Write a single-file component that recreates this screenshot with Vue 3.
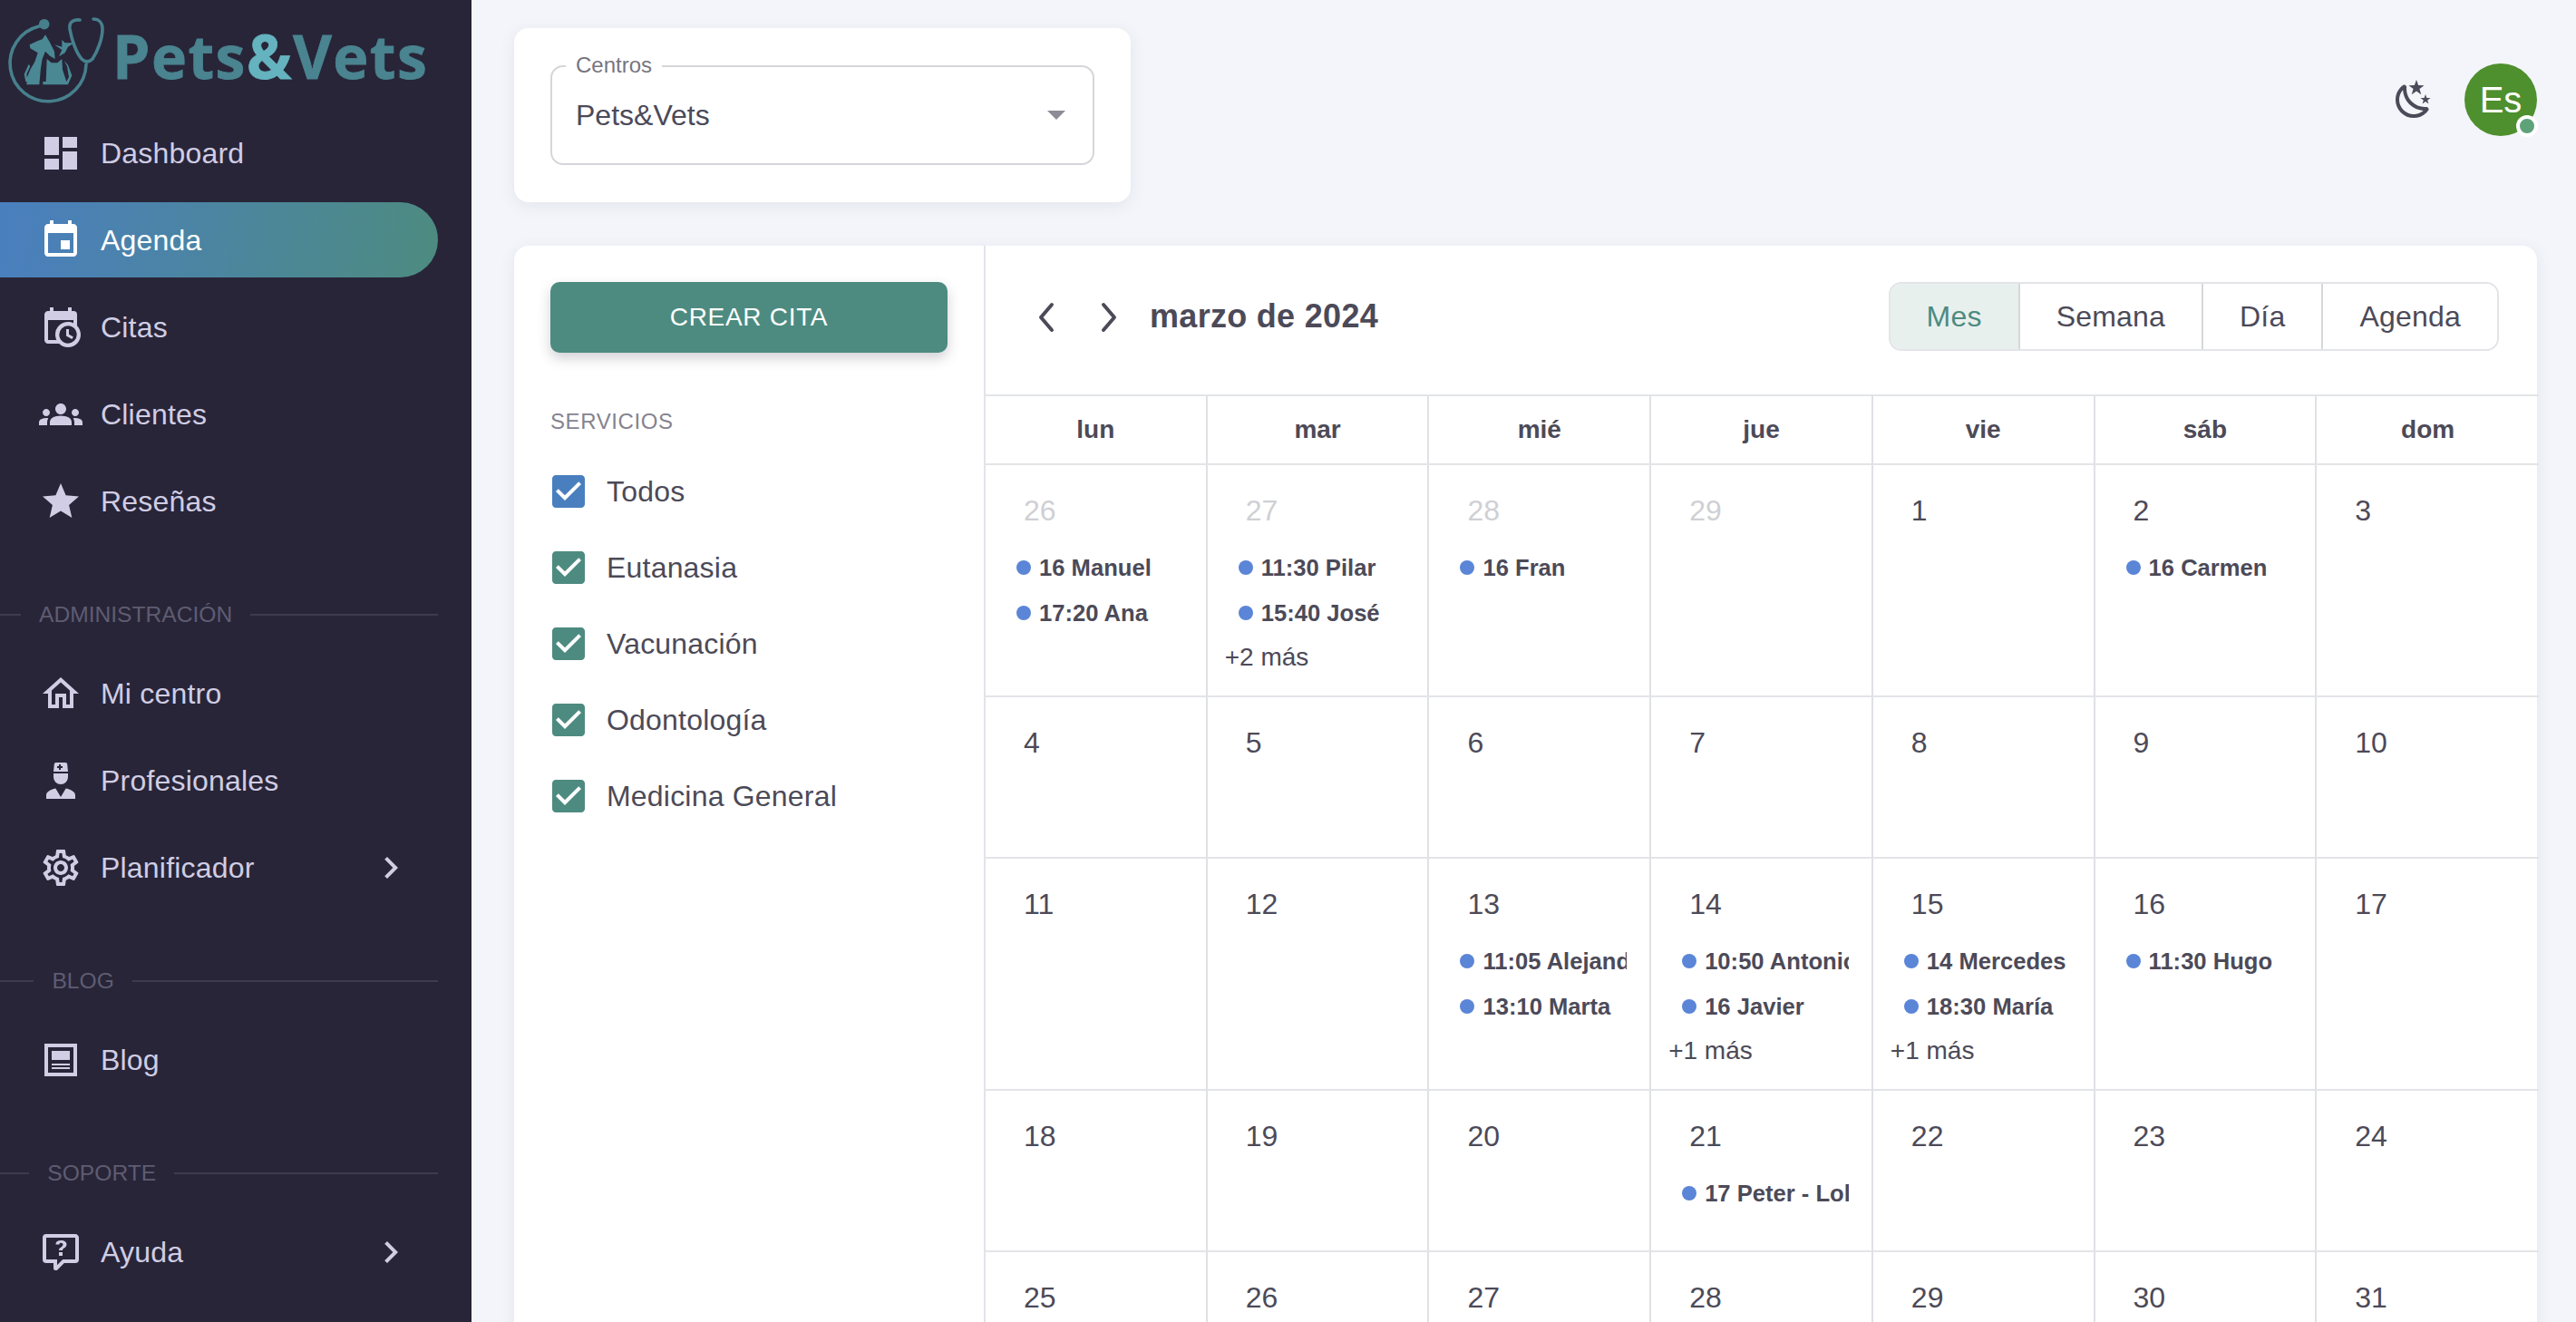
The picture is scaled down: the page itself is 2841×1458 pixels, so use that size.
<template>
  <div class="app">
    <aside class="sidebar">
      <div class="brand">
        <svg class="brand-mark" viewBox="0 0 124 110" width="124" height="110">
          <path d="M43 19A42 42 0 1 0 95 61" fill="none" stroke="#46808c" stroke-width="3.6" stroke-linecap="round" />
          <circle cx="48.7" cy="16.7" r="5.8" fill="#46808c" />
          <path d="M88 12C80 11 76 15 77 22C79 34 84 48 90 55Q96 61 102 55C108 46 113 32 113 22C113 15 109 11 103 11" fill="none" stroke="#46808c" stroke-width="3.6" stroke-linecap="round" />
          <g transform="scale(.3333)" fill="#4a8894">
            <path d="M150 85L165 110L180 140L182 165L165 155L150 140L140 165L135 195L130 250L88 250L90 225L100 200L115 175L125 145L100 130L98 118L125 105L140 100Z" />
            <path d="M95 182L80 215L85 240L92 240L88 215L100 190Z" />
            <path d="M155 165L170 178L190 178L205 165L207 200L215 225L220 240L228 225L222 190L212 170L225 185L238 220L225 250L142 250L142 240L152 240Z" />
            <path d="M180 118L205 125L205 102L215 112L245 112L225 125L215 145L195 157L205 135Z" />
          </g>
        </svg>
        <span class="brand-name">Pets<span class="amp">&amp;</span>Vets</span>
      </div>

      <template v-for="group in menu" :key="group.title">
        <div v-if="group.title !== 'main'" class="section">
          <span class="line short"></span>
          <span class="section-title">{{ group.title }}</span>
          <span class="line long"></span>
        </div>
        <nav class="nav">
          <a v-for="item in group.items" :key="item.label" class="nav-item" :class="{ active: item.active }">
            <svg class="icon" viewBox="0 0 24 24"><path :d="item.icon" /></svg>
            <span class="nav-label">{{ item.label }}</span>
            <svg v-if="item.more" class="icon chevron" viewBox="0 0 24 24"><path d="M10 6 8.59 7.41 13.17 12l-4.58 4.59L10 18l6-6z" /></svg>
          </a>
        </nav>
      </template>
    </aside>

    <main class="main">
      <div class="top">
        <section class="card center-card">
          <div class="select">
            <span class="select-label">Centros</span>
            <span class="select-value">Pets&amp;Vets</span>
            <span class="caret"></span>
          </div>
        </section>
        <div class="top-actions">
          <svg class="icon moon" viewBox="0 0 24 24">
            <path d="M17.75,4.09L15.22,6.03L16.13,9.09L13.5,7.28L10.87,9.09L11.78,6.03L9.25,4.09L12.44,4L13.5,1L14.56,4L17.75,4.09M21.25,11L19.61,12.25L20.2,14.23L18.5,13.06L16.8,14.23L17.39,12.25L15.75,11L17.81,10.95L18.5,9L19.19,10.95L21.25,11M18.97,15.95C19.8,15.87 20.69,17.05 20.16,17.8C19.84,18.25 19.5,18.67 19.08,19.07C15.17,23 8.84,23 4.94,19.07C1.03,15.17 1.03,8.83 4.94,4.93C5.34,4.53 5.76,4.17 6.21,3.85C6.96,3.32 8.14,4.21 8.06,5.04C7.79,7.9 8.75,10.87 10.95,13.06C13.14,15.26 16.1,16.22 18.97,15.95M17.33,17.97C14.5,17.81 11.7,16.64 9.53,14.5C7.36,12.31 6.2,9.5 6.04,6.68C3.23,9.82 3.34,14.64 6.35,17.66C9.37,20.67 14.19,20.78 17.33,17.97Z" />
          </svg>
          <div class="avatar">Es<span class="badge"></span></div>
        </div>
      </div>

      <section class="card agenda">
        <div class="filters">
          <button class="create">CREAR CITA</button>
          <div class="filters-title">SERVICIOS</div>
          <label v-for="(f, i) in filters" :key="f" class="check">
            <svg class="icon box" :class="{ blue: i === 0 }" viewBox="0 0 24 24">
              <path d="M19 3H5c-1.11 0-2 .9-2 2v14c0 1.1.89 2 2 2h14c1.1 0 2-.9 2-2V5c0-1.11-.89-2-2-2zm-9 14l-5-5 1.41-1.41L10 14.17l7.59-7.59L19 8l-9 9z" />
            </svg>
            <span>{{ f }}</span>
          </label>
        </div>

        <div class="calendar">
          <div class="toolbar">
            <svg class="arrow" viewBox="0 0 48 48"><path d="M30 10L18 24L30 38" /></svg>
            <svg class="arrow" viewBox="0 0 48 48"><path d="M18 10L30 24L18 38" /></svg>
            <h2 class="month">marzo de 2024</h2>
            <div class="views">
              <button v-for="v in views" :key="v" class="view" :class="{ on: v === 'Mes' }">{{ v }}</button>
            </div>
          </div>
          <div class="grid">
            <div v-for="d in weekdays" :key="d" class="weekday">{{ d }}</div>
            <div v-for="c in cells" :key="c.key" class="cell">
              <div class="num" :class="{ off: c.off }">{{ c.day }}</div>
              <div v-for="e in c.events" :key="e" class="event"><i class="dot"></i><span>{{ e }}</span></div>
              <div v-if="c.more" class="more">{{ c.more }}</div>
            </div>
          </div>
        </div>
      </section>
    </main>
  </div>
</template>

<script setup>
const menu = [
  {
    title: 'main',
    items: [
      { label: 'Dashboard', icon: 'M3 13h8V3H3v10zm0 8h8v-6H3v6zm10 0h8V11h-8v10zm0-18v6h8V3h-8z' },
      { label: 'Agenda', active: true, icon: 'M17 12h-5v5h5v-5zM16 1v2H8V1H6v2H5c-1.11 0-1.99.9-1.99 2L3 19c0 1.1.89 2 2 2h14c1.1 0 2-.9 2-2V5c0-1.1-.9-2-2-2h-1V1h-2zm3 18H5V8h14v11z' },
      { label: 'Citas', icon: 'M15,13H16.5V15.82L18.94,17.23L18.19,18.53L15,16.69V13M19,8H5V19H9.67C9.24,18.09 9,17.07 9,16A7,7 0 0,1 16,9C17.07,9 18.09,9.24 19,9.67V8M5,21C3.89,21 3,20.1 3,19V5C3,3.89 3.89,3 5,3H6V1H8V3H16V1H18V3H19A2,2 0 0,1 21,5V11.1C22.24,12.36 23,14.09 23,16A7,7 0 0,1 16,23C14.09,23 12.36,22.24 11.1,21H5M16,11.15A4.85,4.85 0 0,0 11.15,16C11.15,18.68 13.32,20.85 16,20.85A4.85,4.85 0 0,0 20.85,16C20.85,13.32 18.68,11.15 16,11.15Z' },
      { label: 'Clientes', icon: 'M12 12.75c1.63 0 3.07.39 4.24.9 1.08.48 1.76 1.56 1.76 2.73V18H6v-1.61c0-1.18.68-2.26 1.76-2.73 1.17-.52 2.61-.91 4.24-.91zM4 13c1.1 0 2-.9 2-2s-.9-2-2-2-2 .9-2 2 .9 2 2 2zm1.13 1.1c-.37-.06-.74-.1-1.13-.1-.99 0-1.93.21-2.78.58C.48 14.9 0 15.62 0 16.43V18h4.5v-1.61c0-.83.23-1.61.63-2.29zM20 13c1.1 0 2-.9 2-2s-.9-2-2-2-2 .9-2 2 .9 2 2 2zm4 3.43c0-.81-.48-1.53-1.22-1.85-.85-.37-1.79-.58-2.78-.58-.39 0-.76.04-1.13.1.4.68.63 1.46.63 2.29V18H24v-1.57zM12 6c1.66 0 3 1.34 3 3s-1.34 3-3 3-3-1.34-3-3 1.34-3 3-3z' },
      { label: 'Reseñas', icon: 'M12 17.27 18.18 21l-1.64-7.03L22 9.24l-7.19-.61L12 2 9.19 8.63 2 9.24l5.46 4.73L5.82 21z' },
    ],
  },
  {
    title: 'ADMINISTRACIÓN',
    items: [
      { label: 'Mi centro', icon: 'M12 5.69L17 10.19V18H15V12H9V18H7V10.19L12 5.69M12 3L2 12H5V20H11V14H13V20H19V12H22' },
      { label: 'Profesionales', icon: 'M14.84,16.26C17.86,16.83 20,18.29 20,20V22H4V20C4,18.29 6.14,16.83 9.16,16.26L12,21L14.84,16.26M8,8H16V10A4,4 0 0,1 12,14A4,4 0 0,1 8,10V8M8,7L8.41,2.9C8.46,2.39 8.89,2 9.41,2H14.6C15.11,2 15.54,2.39 15.59,2.9L16,7H8M12,3H11V4H10V5H11V6H12V5H13V4H12V3Z' },
      { label: 'Planificador', more: true, icon: 'M19.43 12.98c.04-.32.07-.64.07-.98 0-.34-.03-.66-.07-.98l2.11-1.65c.19-.15.24-.42.12-.64l-2-3.46c-.09-.16-.26-.25-.44-.25-.06 0-.12.01-.17.03l-2.49 1c-.52-.4-1.08-.73-1.69-.98l-.38-2.65C14.46 2.18 14.25 2 14 2h-4c-.25 0-.46.18-.49.42l-.38 2.65c-.61.25-1.17.59-1.69.98l-2.49-1c-.06-.02-.12-.03-.18-.03-.17 0-.34.09-.43.25l-2 3.46c-.13.22-.07.49.12.64l2.11 1.65c-.04.32-.07.65-.07.98 0 .33.03.66.07.98l-2.11 1.65c-.19.15-.24.42-.12.64l2 3.46c.09.16.26.25.44.25.06 0 .12-.01.17-.03l2.49-1c.52.4 1.08.73 1.69.98l.38 2.65c.03.24.24.42.49.42h4c.25 0 .46-.18.49-.42l.38-2.65c.61-.25 1.17-.59 1.69-.98l2.49 1c.06.02.12.03.18.03.17 0 .34-.09.43-.25l2-3.46c.12-.22.07-.49-.12-.64l-2.11-1.65zm-1.98-1.71c.04.31.05.52.05.73 0 .21-.02.43-.05.73l-.14 1.13.89.7 1.08.84-.7 1.21-1.27-.51-1.04-.42-.9.68c-.43.32-.84.56-1.25.73l-1.06.43-.16 1.13-.2 1.35h-1.4l-.19-1.35-.16-1.13-1.06-.43c-.43-.18-.83-.41-1.23-.71l-.91-.7-1.06.43-1.27.51-.7-1.21 1.08-.84.89-.7-.14-1.13c-.03-.31-.05-.54-.05-.74s.02-.43.05-.73l.14-1.13-.89-.7-1.08-.84.7-1.21 1.27.51 1.04.42.9-.68c.43-.32.84-.56 1.25-.73l1.06-.43.16-1.13.2-1.35h1.39l.19 1.35.16 1.13 1.06.43c.43.18.83.41 1.23.71l.91.7 1.06-.43 1.27-.51.7 1.21-1.07.85-.89.7.14 1.13zM12 8c-2.21 0-4 1.79-4 4s1.79 4 4 4 4-1.79 4-4-1.79-4-4-4zm0 6c-1.1 0-2-.9-2-2s.9-2 2-2 2 .9 2 2-.9 2-2 2z' },
    ],
  },
  {
    title: 'BLOG',
    items: [
      { label: 'Blog', icon: 'M19 5V19H5V5H19M21 3H3V21H21V3M17 17H7V16H17V17M17 15H7V14H17V15M17 12H7V7H17V12Z' },
    ],
  },
  {
    title: 'SOPORTE',
    items: [
      { label: 'Ayuda', more: true, icon: 'M4,2A2,2 0 0,0 2,4V16A2,2 0 0,0 4,18H8V21A1,1 0 0,0 9,22H9.5C9.75,22 10,21.9 10.2,21.71L13.9,18H20A2,2 0 0,0 22,16V4C22,2.89 21.1,2 20,2H4M4,4H20V16H13.08L10,19.08V16H4V4M12.19,5.5C11.3,5.5 10.59,5.68 10.05,6.04C9.5,6.4 9.22,7 9.27,7.69H11.24C11.24,7.41 11.34,7.2 11.5,7.06C11.7,6.92 11.92,6.85 12.19,6.85C12.5,6.85 12.77,6.93 12.95,7.11C13.13,7.28 13.22,7.5 13.22,7.8C13.22,8.08 13.14,8.33 13,8.54C12.83,8.76 12.62,8.94 12.36,9.08C11.84,9.4 11.5,9.68 11.29,9.92C11.1,10.16 11,10.5 11,11H13C13,10.72 13.05,10.5 13.14,10.32C13.23,10.15 13.4,10 13.66,9.85C14.12,9.64 14.5,9.36 14.79,9C15.08,8.63 15.23,8.24 15.23,7.8C15.23,7.1 14.96,6.54 14.42,6.12C13.88,5.71 13.13,5.5 12.19,5.5M11,12V14H13V12H11Z' },
    ],
  },
]

const filters = ['Todos', 'Eutanasia', 'Vacunación', 'Odontología', 'Medicina General']
const views = ['Mes', 'Semana', 'Día', 'Agenda']
const weekdays = ['lun', 'mar', 'mié', 'jue', 'vie', 'sáb', 'dom']

const events = {
  'f26': { events: ['16 Manuel', '17:20 Ana'] },
  'f27': { events: ['11:30 Pilar', '15:40 José'], more: '+2 más' },
  'f28': { events: ['16 Fran'] },
  2: { events: ['16 Carmen'] },
  13: { events: ['11:05 Alejandro', '13:10 Marta'] },
  14: { events: ['10:50 Antonio', '16 Javier'], more: '+1 más' },
  15: { events: ['14 Mercedes', '18:30 María'], more: '+1 más' },
  16: { events: ['11:30 Hugo'] },
  21: { events: ['17 Peter - Lola'] },
}

const cells = [
  ...[26, 27, 28, 29].map((day) => ({ key: 'f' + day, day, off: true, ...events['f' + day] })),
  ...Array.from({ length: 31 }, (_, i) => ({ key: i + 1, day: i + 1, ...events[i + 1] })),
]
</script>

<style scoped>
.app {
  display: flex;
  height: 100vh;
  overflow: hidden;
  background: #f3f5fa;
  font-family: "Liberation Sans", Arial, sans-serif;
  color: #4c4a58;
}
.icon { width: 48px; height: 48px; flex: none; fill: currentColor; }

.sidebar { width: 520px; flex: none; background: #282538; color: #d0cde4; }
.brand { display: flex; align-items: flex-start; height: 127px; padding-top: 10px; box-sizing: border-box; }
.brand-mark { flex: none; }
.brand-name {
  font-family: "Open Sans", sans-serif;
  font-weight: 700;
  font-size: 66px;
  line-height: 90px;
  letter-spacing: 1.5px;
  -webkit-text-stroke: .8px currentColor;
  color: #4a8490;
  margin-top: 6px;
}
.amp { color: #66b3c0; }

.nav { display: flex; flex-direction: column; gap: 13px; }
.nav-item {
  display: flex;
  align-items: center;
  gap: 20px;
  height: 83px;
  width: 483px;
  padding: 0 28px 0 43px;
  box-sizing: border-box;
  font-size: 32px;
  letter-spacing: .2px;
  border-radius: 0 42px 42px 0;
}
.nav-label { margin-top: 1px; }
.nav-item.active {
  color: #fff;
  background: linear-gradient(98deg, #4a7fbf, #4d8b80);
}
.chevron { margin-left: auto; }

.section { display: flex; align-items: center; width: 483px; height: 30px; margin: 69px 0 30px; color: #5f5c72; }
.section-title { font-size: 24.6px; padding: 0 20px; white-space: nowrap; }
.line { height: 2px; background: #3e3b4e; }
.line.short { flex: 1; }
.line.long { flex: 9; }

.main { flex: 1; min-width: 0; padding: 31px 43px 0 47px; }
.top { display: flex; align-items: center; justify-content: space-between; margin-bottom: 48px; }
.card { background: #fff; border-radius: 16px; box-shadow: 0 4px 18px rgba(50, 50, 93, .08); }
.center-card { width: 680px; height: 192px; padding: 41px 40px 0 40px; box-sizing: border-box; }
.select {
  position: relative;
  display: flex;
  align-items: center;
  justify-content: space-between;
  height: 110px;
  padding: 0 30px 0 26px;
  border: 2px solid #d6d6da;
  border-radius: 14px;
  box-sizing: border-box;
}
.select-label {
  position: absolute;
  left: 15px;
  top: -16px;
  padding: 0 11px;
  background: #fff;
  font-size: 24px;
  line-height: 28px;
  color: #77757f;
}
.select-value { font-size: 32px; }
.caret { width: 0; height: 0; border-left: 10px solid transparent; border-right: 10px solid transparent; border-top: 10px solid #8d8c94; }

.top-actions { display: flex; align-items: center; gap: 32px; margin-bottom: 34px; }
.avatar {
  position: relative;
  display: flex;
  align-items: center;
  justify-content: center;
  width: 80px;
  height: 80px;
  border-radius: 50%;
  background: #4e8f2e;
  color: #fff;
  font-size: 40px;
}
.badge {
  position: absolute;
  right: -1px;
  bottom: -1px;
  width: 16px;
  height: 16px;
  border-radius: 50%;
  background: #5ea27a;
  border: 4px solid #fff;
}

.agenda { display: flex; height: 1300px; }
.filters { width: 520px; flex: none; padding: 40px; box-sizing: border-box; border-right: 2px solid #e3e4e8; }
.create {
  display: block;
  width: 100%;
  height: 78px;
  border: 0;
  border-radius: 10px;
  background: #4d8b80;
  color: #fff;
  font: inherit;
  font-size: 28px;
  letter-spacing: .7px;
  box-shadow: 0 6px 14px rgba(60, 60, 80, .24);
}
.filters-title { margin: 61px 0 20px; font-size: 24px; line-height: 30px; letter-spacing: .6px; color: #85838f; }
.check { display: flex; align-items: center; gap: 18px; height: 84px; margin-left: -4px; font-size: 32px; letter-spacing: .2px; }
.box { fill: #4d8b80; }
.box.blue { fill: #4a7fbf; }

.calendar { flex: 1; min-width: 0; margin-right: -2px; }
.toolbar { display: flex; align-items: center; gap: 21px; height: 166px; padding: 0 44px 8px 43px; box-sizing: border-box; border-bottom: 2px solid #e3e4e8; }
.arrow { width: 48px; height: 48px; flex: none; margin-top: 2px; fill: none; stroke: #4c4a58; stroke-width: 4; stroke-linecap: round; stroke-linejoin: round; }
.month { margin: 0; font-size: 36px; font-weight: 700; letter-spacing: .3px; }
.views { display: flex; margin-left: auto; height: 76px; border: 2px solid #e3e4e8; border-radius: 14px; box-sizing: border-box; overflow: hidden; }
.view { padding: 0 40px; border: 0; border-left: 2px solid #d6d7da; background: #fff; font: inherit; font-size: 32px; letter-spacing: .2px; color: #4c4a58; }
.view:first-child { border-left: 0; }
.view.on { background: #e8f0ee; color: #4d8b80; }

.grid { display: grid; grid-template-columns: repeat(7, 1fr); align-items: stretch; }
.weekday {
  height: 76px;
  line-height: 74px;
  box-sizing: border-box;
  text-align: center;
  font-size: 28px;
  font-weight: 700;
  border-bottom: 2px solid #e3e4e8;
  border-right: 2px solid #e0e1e5;
}
.cell {
  min-width: 0;
  min-height: 178px;
  padding: 30px 0 18px;
  box-sizing: border-box;
  border-bottom: 2px solid #e3e4e8;
  border-right: 2px solid #e0e1e5;
}
.weekday:nth-child(7n), .cell:nth-child(7n) { border-right: 0; }
.num { height: 40px; line-height: 40px; margin: 0 0 18px 42px; font-size: 32px; }
.num.off { color: #cfd0d4; }
.event {
  display: flex;
  align-items: center;
  gap: 9px;
  height: 50px;
  margin: 0 25px 0 21px;
  padding-left: 13px;
  overflow: hidden;
  white-space: nowrap;
  font-size: 25.6px;
  font-weight: 700;
}
.dot { width: 16px; height: 16px; flex: none; border-radius: 50%; background: #5b85d6; }
.more { margin-left: 19px; height: 48px; line-height: 48px; font-size: 28px; }
</style>

<style>
html, body { margin: 0; overflow: hidden; }
</style>
